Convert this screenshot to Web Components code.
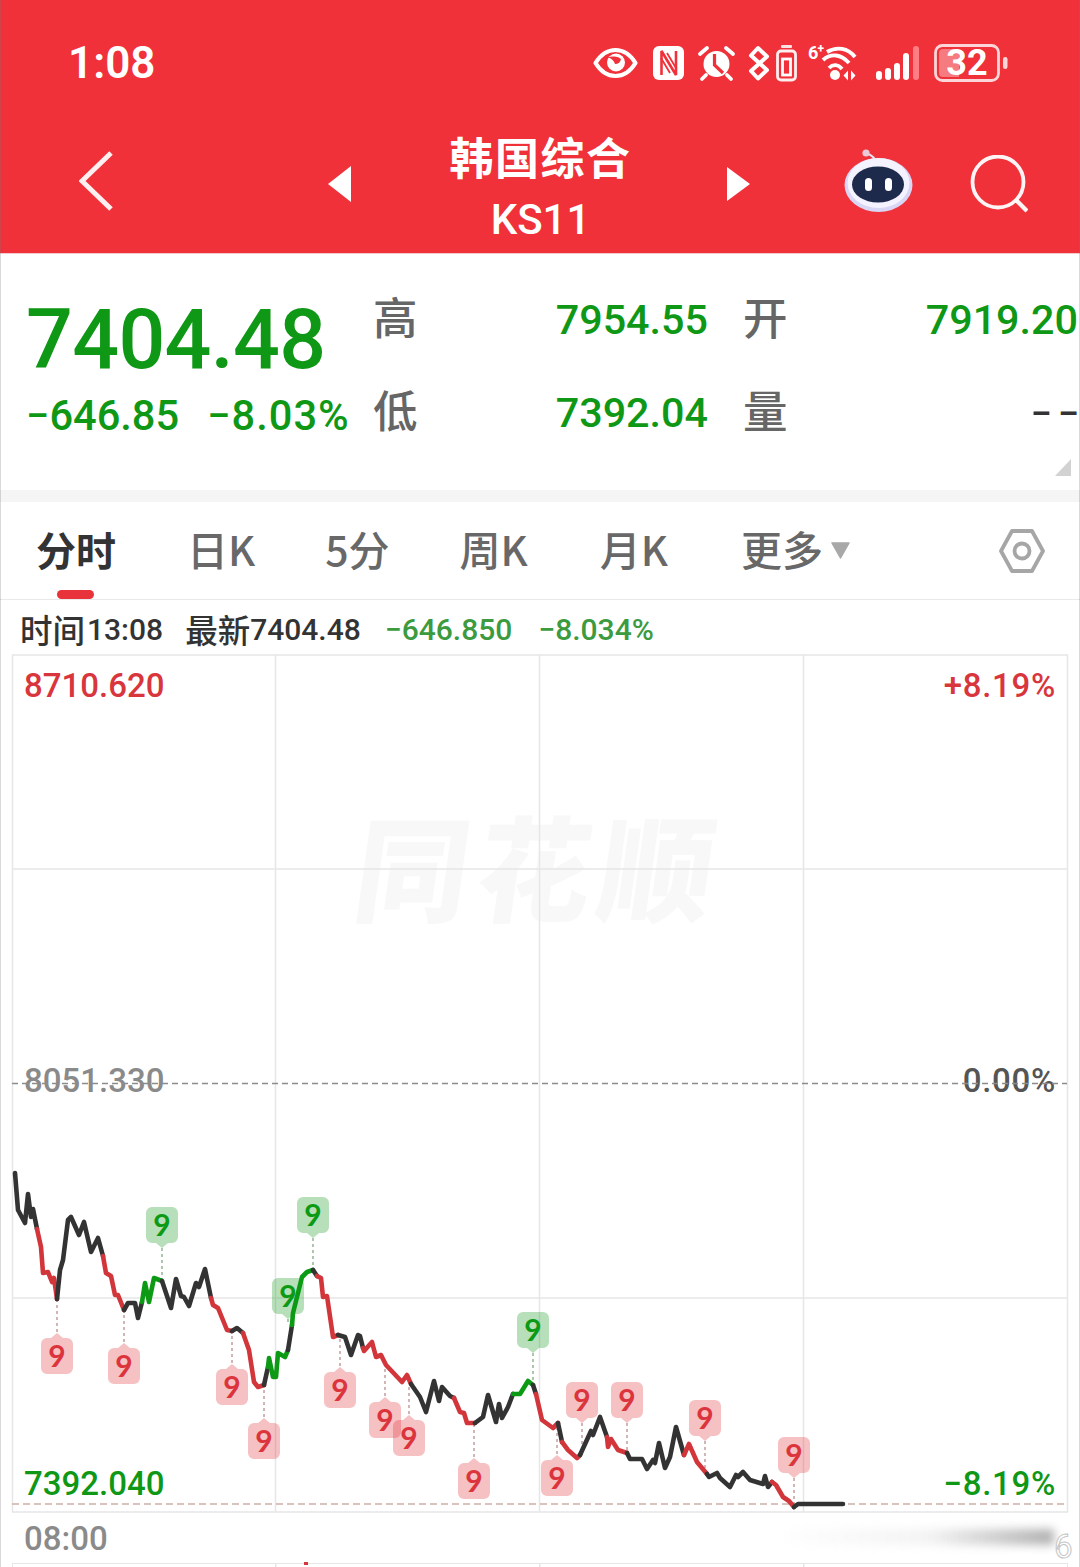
<!doctype html>
<html lang="zh">
<head>
<meta charset="utf-8">
<title>韩国综合 KS11</title>
<style>
  html, body { margin: 0; padding: 0; background: #fff; }
  body { width: 1080px; height: 1567px; overflow: hidden; font-family: Roboto, "Noto Sans CJK SC", sans-serif; }
  stock-page { display: block; }
</style>
</head>
<body>
<stock-page>
  <top-header>
    <status-bar time="1:08" level="32"></status-bar>
    <nav-bar name="韩国综合" code="KS11"></nav-bar>
  </top-header>
  <quote-panel price="7404.48" change="−646.85" percent="−8.03%" high="7954.55" low="7392.04" open="7919.20" volume="– –"></quote-panel>
  <period-tabs></period-tabs>
  <cross-info></cross-info>
  <intraday-chart></intraday-chart>
  <time-axis start="08:00"></time-axis>
  <volume-head></volume-head>
</stock-page>

<script>
const CJK = '"Noto Sans CJK SC", sans-serif';
const GREEN = '#0f9716';
const RED = '#d8363c';
const BAR = '#f0313a';

function define(name, css, html, setup) {
  customElements.define(name, class extends HTMLElement {
    connectedCallback() {
      const root = this.attachShadow({ mode: 'open' });
      const read = key => this.getAttribute(key) || '';
      root.innerHTML = `<style>${css}</style>${typeof html === 'function' ? html(read) : html}`;
      if (setup) setup(root, read);
    }
  });
}

define('stock-page', `
  :host { display: block; position: relative; width: 1080px; height: 1567px; overflow: hidden; }
  .edge { position: absolute; top: 0; bottom: 0; width: 1px; background: rgba(120,120,120,.28); z-index: 9; }
  .l { left: 0; } .r { right: 0; }
`, `<slot></slot><div class="edge l"></div><div class="edge r"></div>`);

define('top-header', `
  :host { display: block; height: 253px; background: ${BAR}; border-bottom: 1px solid #f3c9cc; }
`, `<slot></slot>`);

define('status-bar', `
  :host { display: flex; align-items: center; height: 126px; padding: 0 72px 0 68px; color: #fff; }
  .time { font: 600 44px/1 Roboto, sans-serif; margin-right: auto; }
  svg { display: block; flex: none; overflow: visible; }
  .nfc { margin-left: 15px; } .alarm { margin-left: 14px; }
  .bt { margin-left: 13px; } .cell { margin-left: 6px; } .wifi { margin-left: 11px; }
  .bars { margin-left: 20px; } .batt { margin-left: 15px; }
`, read => `
  <span class="time">${read('time')}</span>
  <svg class="eye" width="45" height="32" viewBox="0 0 45 32">
    <path d="M2.500 16C8 7 14 3 22.500 3S37 7 42.500 16C37 25 31 29 22.500 29S8 25 2.500 16Z" fill="none" stroke="#fff" stroke-width="4.200" stroke-linejoin="round"/>
    <circle cx="23" cy="15.500" r="9" fill="#fff"/>
    <path d="M14 11a9 5 0 0 1 14 1a6 6 0 0 1-6 5a8 8 0 0 0-3-4.500a5 5 0 0 0-5-1.500Z" fill="${BAR}"/>
  </svg>
  <svg class="nfc" width="31" height="34" viewBox="0 0 31 34">
    <rect width="31" height="34" rx="6" fill="#fff"/>
    <path d="M8.500 29V5L23 29V5" fill="none" stroke="${BAR}" stroke-width="2.600" stroke-linejoin="bevel"/>
    <path d="M8 12L17 27M14 7L23 22" fill="none" stroke="${BAR}" stroke-width="1.800"/>
  </svg>
  <svg class="alarm" width="37" height="36" viewBox="0 0 37 36">
    <circle cx="18.500" cy="19" r="13" fill="#fff"/>
    <path d="M16.500 9V20L25 28" stroke="${BAR}" stroke-width="3.200" fill="none"/>
    <path d="M2 9L9 3M35 9L28 3" stroke="#fff" stroke-width="3.800" stroke-linecap="round"/>
    <path d="M8 30L4 34M29 30L33 34" stroke="#fff" stroke-width="3.800" stroke-linecap="round"/>
  </svg>
  <svg class="bt" width="22" height="36" viewBox="0 0 22 36">
    <path d="M3 10.500L10 3L19 11.500L3 26L10 33.500L19 25L3 10.500Z" fill="none" stroke="#fff" stroke-width="4" stroke-linejoin="round"/>
  </svg>
  <svg class="cell" width="21" height="36" viewBox="0 0 21 36">
    <rect x="5" y="0" width="11" height="3" rx="1" fill="#fff" opacity=".85"/>
    <rect x="1.500" y="6" width="18" height="29" rx="3.500" fill="none" stroke="#fff" stroke-width="2.800" opacity=".92"/>
    <rect x="6.500" y="14" width="8" height="16" fill="none" stroke="#fff" stroke-width="2.800"/>
  </svg>
  <svg class="wifi" width="48" height="36" viewBox="0 0 48 36">
    <text x="0" y="14" font-family="Roboto" font-weight="700" font-size="18" fill="#fff">6</text>
    <text x="9.500" y="8" font-family="Roboto" font-weight="700" font-size="12" fill="#fff">+</text>
    <path d="M19 7C29 1 40 3 47 12M15 15C23 8 33 9 41 18M21 23C25 19 30 19 34 24" fill="none" stroke="#fff" stroke-width="3.800"/>
    <circle cx="27" cy="30" r="5" fill="#fff"/>
    <path d="M40 25.500L35.500 30.500L40 35.500ZM43 25.500L47.500 30.500L43 35.500Z" fill="#fff"/>
  </svg>
  <svg class="bars" width="43" height="34" viewBox="0 0 43 34">
    <rect x="0" y="25" width="6" height="9" rx="3" fill="#fff"/>
    <rect x="9" y="22" width="6" height="12" rx="3" fill="#fff"/>
    <rect x="18" y="17" width="6" height="17" rx="3" fill="#fff"/>
    <rect x="27" y="7" width="6" height="27" rx="3" fill="#fff"/>
    <rect x="37" y="0" width="6" height="34" rx="3" fill="#ff7e85"/>
  </svg>
  <svg class="batt" width="74" height="38" viewBox="0 0 74 38">
    <rect x="1.500" y="1.500" width="63" height="35" rx="7" fill="none" stroke="#fbd5d7" stroke-width="2.800"/>
    <path d="M5 9a4 4 0 0 1 4-4H25V33H9a4 4 0 0 1-4-4Z" fill="#f57b81"/>
    <text x="33" y="31" text-anchor="middle" font-family="Roboto" font-weight="700" font-size="36" fill="#fff">${read('level')}</text>
    <rect x="69" y="13" width="4.500" height="12" rx="2.200" fill="#fbd5d7"/>
  </svg>
`);

define('nav-bar', `
  :host { display: grid; grid-template-columns: 79px 34px 215px 23px 1fr 23px 94px 69px 57px 58px 52px; height: 127px; align-items: center; color: #fff; }
  svg { display: block; }
  .title { grid-column: 5; height: 127px; display: flex; flex-direction: column; justify-content: center; text-align: center; padding-left: 3px; }
  .name { font: 700 44px/56px ${CJK}; letter-spacing: 1.600px; margin-top: -3px; }
  .code { font: 500 42px/58px Roboto, sans-serif; margin-top: 7px; }
  .back { grid-column: 2; margin-top: -17px; }
  .prev { grid-column: 4; margin-top: -12px; }
  .next { grid-column: 6; margin-top: -12px; }
  .bot { grid-column: 8; margin-top: -19px; }
  .find { grid-column: 10; margin-top: -12px; }
`, read => `
  <svg class="back" width="34" height="60" viewBox="0 0 34 60"><path d="M32 2L3 30L32 58" fill="none" stroke="#fff" stroke-width="5" opacity=".93"/></svg>
  <svg class="prev" width="23" height="36" viewBox="0 0 23 36"><path d="M23 0V36L0 18Z" fill="#fff"/></svg>
  <div class="title"><div class="name">${read('name')}</div><div class="code">${read('code')}</div></div>
  <svg class="next" width="23" height="34" viewBox="0 0 23 34"><path d="M0 0V34L23 17Z" fill="#fff"/></svg>
  <svg class="bot" width="69" height="64" viewBox="0 0 69 64">
    <path d="M31 12C30 8 27 8 25 6" stroke="#e8e4f8" stroke-width="2" fill="none"/>
    <circle cx="22" cy="5" r="3.600" fill="#ecc9d8"/>
    <ellipse cx="34.500" cy="37" rx="34" ry="27" fill="#d9d6f5"/>
    <ellipse cx="34.500" cy="35" rx="31" ry="25" fill="#f4f2ff"/>
    <ellipse cx="34" cy="36.500" rx="26" ry="18" fill="#1e2a4c"/>
    <rect x="21" y="30" width="7" height="13" rx="3.500" fill="#fff"/>
    <rect x="41" y="30" width="7" height="13" rx="3.500" fill="#fff"/>
  </svg>
  <svg class="find" width="58" height="58" viewBox="0 0 58 58">
    <circle cx="28" cy="27" r="25.500" fill="none" stroke="#fff" stroke-width="3.800" opacity=".95"/>
    <path d="M46 45L57 56" stroke="#fff" stroke-width="4.400" opacity=".95"/>
  </svg>
`);

define('quote-panel', `
  :host { display: grid; grid-template-columns: 375px 1fr; height: 236px; box-sizing: border-box; position: relative; background: #fff; color: ${GREEN}; }
  .left { padding: 36px 0 0 26px; }
  .price { font: 500 82.500px/100px Roboto, sans-serif; letter-spacing: -.7px; }
  .moves { display: flex; font: 500 41.600px/50px Roboto, sans-serif; margin-top: 1px; }
  .moves span + span { margin-left: 28px; letter-spacing: 1px; }
  .right { display: grid; grid-template-columns: 42px 291px 37px 42px 291px; grid-auto-rows: 93px; padding-top: 20px; align-items: center; }
  .lab { font: 500 44.500px/1 ${CJK}; color: #666; margin: -8px 0 0 -2px; white-space: nowrap; }
  .val { text-align: right; font: 500 41.300px/1 Roboto, sans-serif; white-space: nowrap; }
  .dash { color: #333; font-size: 31px; font-weight: 700; }
  .corner { position: absolute; left: 1055px; top: 205px; width: 16px; height: 17px; background: #d2d2d2; clip-path: polygon(100% 0, 100% 100%, 0 100%); }
`, read => `
  <div class="left">
    <div class="price">${read('price')}</div>
    <div class="moves"><span>${read('change')}</span><span>${read('percent')}</span></div>
  </div>
  <div class="right">
    <span class="lab">高</span><span class="val">${read('high')}</span><span></span>
    <span class="lab">开</span><span class="val">${read('open')}</span>
    <span class="lab">低</span><span class="val">${read('low')}</span><span></span>
    <span class="lab">量</span><span class="val dash">${read('volume')}</span>
  </div>
  <div class="corner"></div>
`);

define('period-tabs', `
  :host { display: flex; align-items: center; height: 110px; box-sizing: border-box; padding: 0 36px 4px 36px; position: relative; background: #fff;
          border-top: 12px solid #f5f5f5; border-bottom: 1px solid #e9e9e9; font: 500 41px/1 ${CJK}; color: #686868; }
  span { white-space: nowrap; }
  .on { font-weight: 700; font-size: 40px; color: #333; position: relative; }
  .on::after { content: ""; position: absolute; left: 21px; top: 61px; width: 37px; height: 9px; border-radius: 5px; background: #e8333a; }
  .d { margin-left: 71px; } .m5 { margin-left: 70px; } .w { margin-left: 70px; } .mo { margin-left: 72px; } .more { margin-left: 73px; display: flex; align-items: center; }
  .more svg { margin: 3px 0 0 7px; }
  .gear { margin: 4px -1px 0 auto; }
  svg { display: block; }
`, `
  <span class="on">分时</span><span class="d">日K</span><span class="m5">5分</span><span class="w">周K</span><span class="mo">月K</span>
  <span class="more">更多<svg width="21" height="17" viewBox="0 0 21 17"><path d="M2 1H19L10.500 16Z" fill="#a8a8a8" stroke="#a8a8a8" stroke-linejoin="round" stroke-width="1.500"/></svg></span>
  <svg class="gear" width="46" height="44" viewBox="0 0 46 44">
    <path d="M13 2H33L44 22L33 42H13L2 22Z" fill="none" stroke="#a6a6a6" stroke-width="3.800" stroke-linejoin="round"/>
    <circle cx="23" cy="22" r="7.500" fill="none" stroke="#a6a6a6" stroke-width="3.800"/>
  </svg>
`);

define('cross-info', `
  :host { display: flex; align-items: center; height: 55px; box-sizing: border-box; padding: 5px 0 0 20px; color: #333; font: 500 30px/1 Roboto, sans-serif; background: #fff; white-space: nowrap; }
  b { font: 500 32.500px/1 ${CJK}; margin-top: -1px; }
  .g { color: #3c9a3f; }
  .a { margin-left: 2px; } .c { margin-left: 22px; } .e { margin-left: 24px; } .f { margin-left: 26px; }
`, `
  <b>时间</b><span class="a">13:08</span><b class="c">最新</b><span>7404.48</span><span class="g e">−646.850</span><span class="g f">−8.034%</span>
`);

/* price chart: scene coordinates are page coordinates, offset by the frame's own origin */
const TONE = { k: '#333333', r: '#d2363a', g: '#0c9a14' };
const TRACE = [
  ['k', '15,1173 18,1210 25,1223 28,1194 31,1217 33,1209 37,1229'],
  ['r', '37,1229 41,1247 43,1273 48,1272 52,1282 54,1278 57,1299'],
  ['k', '57,1299 60,1270 63,1260 68,1220 71,1217 79,1235 84,1222 91,1252 98,1238 103,1256'],
  ['r', '103,1256 106,1273 111,1276 115,1295 118,1295 124,1310'],
  ['k', '124,1310 128,1303 135,1303 138,1318 142,1302'],
  ['g', '142,1302 145,1283 149,1302 154,1278 162,1281'],
  ['k', '162,1281 171,1308 176,1279 181,1296 184,1297 189,1306 196,1283 199,1287 205,1269 211,1298'],
  ['r', '211,1298 213,1305 218,1308 227,1330 232,1331'],
  ['k', '232,1331 237,1328 243,1333'],
  ['r', '243,1333 249,1350 254,1382 258,1387 264,1385'],
  ['k', '264,1385 268,1367'],
  ['g', '268,1367 269,1358 273,1377 276,1377 278,1353 285,1357 288,1350'],
  ['k', '288,1350 292,1325'],
  ['g', '292,1325 293,1313 298,1293 302,1277 307,1272 313,1270'],
  ['k', '313,1270 317,1276'],
  ['r', '317,1276 321,1278 323,1297 327,1296 333,1337 338,1335'],
  ['k', '338,1335 345,1337 351,1355 358,1335 360,1336 363,1348'],
  ['r', '363,1348 364,1351 372,1342 376,1357 381,1355 386,1365 402,1382 407,1375 411,1384'],
  ['k', '411,1384 420,1397 426,1412 434,1381 439,1401 442,1387 450,1396 454,1398'],
  ['r', '454,1398 460,1412 464,1413 467,1423 475,1423'],
  ['k', '475,1423 483,1417 488,1395 496,1422 499,1404 502,1418 508,1407 513,1394'],
  ['g', '513,1394 520,1394 528,1381 533,1385'],
  ['k', '533,1385 536,1394'],
  ['r', '536,1394 542,1420 553,1428 558,1423'],
  ['k', '558,1423 562,1442'],
  ['r', '562,1442 568,1450 577,1458 580,1455'],
  ['k', '580,1455 591,1431 593,1435 600,1417 607,1437'],
  ['r', '607,1437 608,1447 611,1439 618,1450 627,1453'],
  ['k', '627,1453 630,1459 642,1459 647,1469 653,1460 655,1463 659,1443 665,1468 670,1457 676,1427 684,1455'],
  ['r', '684,1455 689,1444 697,1462 707,1474'],
  ['k', '707,1474 709,1477 717,1473 720,1478 730,1487 736,1475 738,1477 743,1472 750,1480 763,1484 765,1476 768,1487 772,1482'],
  ['r', '772,1482 776,1485 783,1497 789,1501 794,1507'],
  ['k', '794,1507 798,1504 843,1504']
];
/* x, top of tag, point direction, tone, y where the leader meets the trace */
const SIGNALS = [
  [57, 1333, 'up', 'r', 1299], [124, 1343, 'up', 'r', 1310], [232, 1364, 'up', 'r', 1331],
  [264, 1418, 'up', 'r', 1385], [340, 1367, 'up', 'r', 1335], [385, 1397, 'up', 'r', 1366],
  [409, 1415, 'up', 'r', 1384], [474, 1458, 'up', 'r', 1423], [557, 1455, 'up', 'r', 1423],
  [162, 1207, 'down', 'g', 1281], [313, 1197, 'down', 'g', 1270], [288, 1278, 'down', 'g', 1325],
  [533, 1312, 'down', 'g', 1381], [582, 1382, 'down', 'r', 1455], [627, 1382, 'down', 'r', 1453],
  [705, 1400, 'down', 'r', 1474], [794, 1437, 'down', 'r', 1505]
];

define('signal-tag', `
  :host { position: absolute; width: 32px; height: 41px; display: block; }
  svg { position: absolute; inset: 0; display: block; }
  span { position: absolute; left: 0; right: 0; text-align: center; font: 700 30px/1 Lato, sans-serif; }
`, read => {
  const up = read('dir') === 'up';
  const green = read('tone') === 'g';
  const fill = green ? 'rgba(15,150,25,.3)' : 'rgba(226,50,55,.3)';
  const d = up
    ? 'M16 0L22 5H26a6 6 0 0 1 6 6V35a6 6 0 0 1-6 6H6a6 6 0 0 1-6-6V11a6 6 0 0 1 6-6H10Z'
    : 'M6 0H26a6 6 0 0 1 6 6V30a6 6 0 0 1-6 6H22L16 41L10 36H6a6 6 0 0 1-6-6V6a6 6 0 0 1 6-6Z';
  return `<svg width="32" height="41" viewBox="0 0 32 41"><path d="${d}" fill="${fill}"/></svg>
    <span style="top:${up ? 7 : 2}px;color:${green ? '#0c9a14' : '#dc343c'}">9</span>`;
});

define('intraday-chart', `
  :host { display: block; position: relative; width: 1056px; height: 858px; margin-left: 12px; box-sizing: border-box; background: #fff; overflow: visible; }
  svg.layer { position: absolute; left: 0; top: 0; display: block; overflow: visible; }
  svg.top { z-index: 3; pointer-events: none; }
  signal-tag { z-index: 2; }
  .mark { position: absolute; font: 500 33px/1 Roboto, sans-serif; white-space: nowrap; z-index: 1; }
  .lft { left: 12px; } .rgt { right: 12px; letter-spacing: .7px; }
  .up { color: ${RED}; } .flat { color: #8a8a8a; } .flat.dark { color: #555; } .dn { color: ${GREEN}; }
  .brand { position: absolute; left: 345px; top: 144px; font: 900 114px/130px ${CJK}; letter-spacing: 8px; color: #f8f8f8; transform: skewX(-8deg); white-space: nowrap; }
`, `
  <div class="brand">同花顺</div>
  <svg class="layer" id="grid" width="1056" height="858" viewBox="12 655 1056 858"></svg>
  <span class="mark lft up" style="top:14px">8710.620</span>
  <span class="mark rgt up" style="top:14px">+8.19%</span>
  <span class="mark lft flat" style="top:409px">8051.330</span>
  <span class="mark rgt flat dark" style="top:409px">0.00%</span>
  <span class="mark lft dn" style="top:812px">7392.040</span>
  <span class="mark rgt dn" style="top:812px">−8.19%</span>
  <svg class="layer top" id="trace" width="1056" height="858" viewBox="12 655 1056 858"></svg>
`, root => {
  let grid = '<rect x="12.500" y="655" width="1055" height="857" fill="none" stroke="#e6e6e6" stroke-width="1.500"/>';
  for (const x of [275.5, 539.5, 803.5]) grid += `<line x1="${x}" x2="${x}" y1="655" y2="1512" stroke="#e6e6e6" stroke-width="1.500"/>`;
  for (const y of [869, 1298]) grid += `<line x1="12" x2="1067" y1="${y}" y2="${y}" stroke="#e6e6e6" stroke-width="1.500"/>`;
  root.getElementById('grid').innerHTML = grid;

  let art = '<line x1="12" x2="1067" y1="1083.500" y2="1083.500" stroke="#8c8c8c" stroke-width="1.500" stroke-dasharray="6 4"/>';
  art += '<line x1="12" x2="1067" y1="1504" y2="1504" stroke="#cdb0a6" stroke-width="1.500" stroke-dasharray="7 4"/>';
  for (const [x, top, dir, tone, end] of SIGNALS) {
    const from = dir === 'up' ? top - 1 : top + 41;
    art += `<line x1="${x}" x2="${x}" y1="${from}" y2="${end}" stroke="${tone === 'g' ? '#5a8f5c' : '#a86a6a'}" stroke-width="1" stroke-dasharray="3 3"/>`;
  }
  for (const [tone, pts] of TRACE) {
    art += `<polyline points="${pts}" fill="none" stroke="${TONE[tone]}" stroke-width="4.600" stroke-linejoin="round" stroke-linecap="round"/>`;
  }
  root.getElementById('trace').innerHTML = art;

  for (const [x, top, dir, tone] of SIGNALS) {
    const tag = document.createElement('signal-tag');
    tag.setAttribute('dir', dir);
    tag.setAttribute('tone', tone);
    tag.style.left = (x - 16 - 12) + 'px';
    tag.style.top = (top - 655) + 'px';
    root.appendChild(tag);
  }
});

define('time-axis', `
  :host { display: flex; align-items: center; height: 50px; padding-left: 24px; position: relative; background: #fff; font: 500 33px/1 Roboto, sans-serif; color: #8a8a8a; }
  .fade { position: absolute; left: 777px; right: 26px; top: 16px; height: 16px; background: linear-gradient(90deg, rgba(190,190,190,0), rgba(235,235,235,.6) 55%, #b0b0b0); filter: blur(5px); }
  .tail { position: absolute; left: 1054px; top: 17px; color: #fff; -webkit-text-stroke: 1px #c4c4c4; font-weight: 400; }
`, read => `<span>${read('start')}</span><div class="fade"></div><span class="tail">6</span>`);

define('volume-head', `
  :host { display: block; position: relative; height: 10px; margin: 0 12px; border-top: 1.500px solid #e6e6e6; border-left: 1.500px solid #e6e6e6; border-right: 1.500px solid #e6e6e6;
          background:
            linear-gradient(#e6e6e6, #e6e6e6) 262px 0 / 1.500px 100% no-repeat,
            linear-gradient(#e6e6e6, #e6e6e6) 526px 0 / 1.500px 100% no-repeat,
            linear-gradient(#e6e6e6, #e6e6e6) 790px 0 / 1.500px 100% no-repeat; }
  i { position: absolute; left: 291px; top: -2px; width: 4px; height: 3px; background: #d8363c; }
`, `<i></i>`);
</script>
</body>
</html>
